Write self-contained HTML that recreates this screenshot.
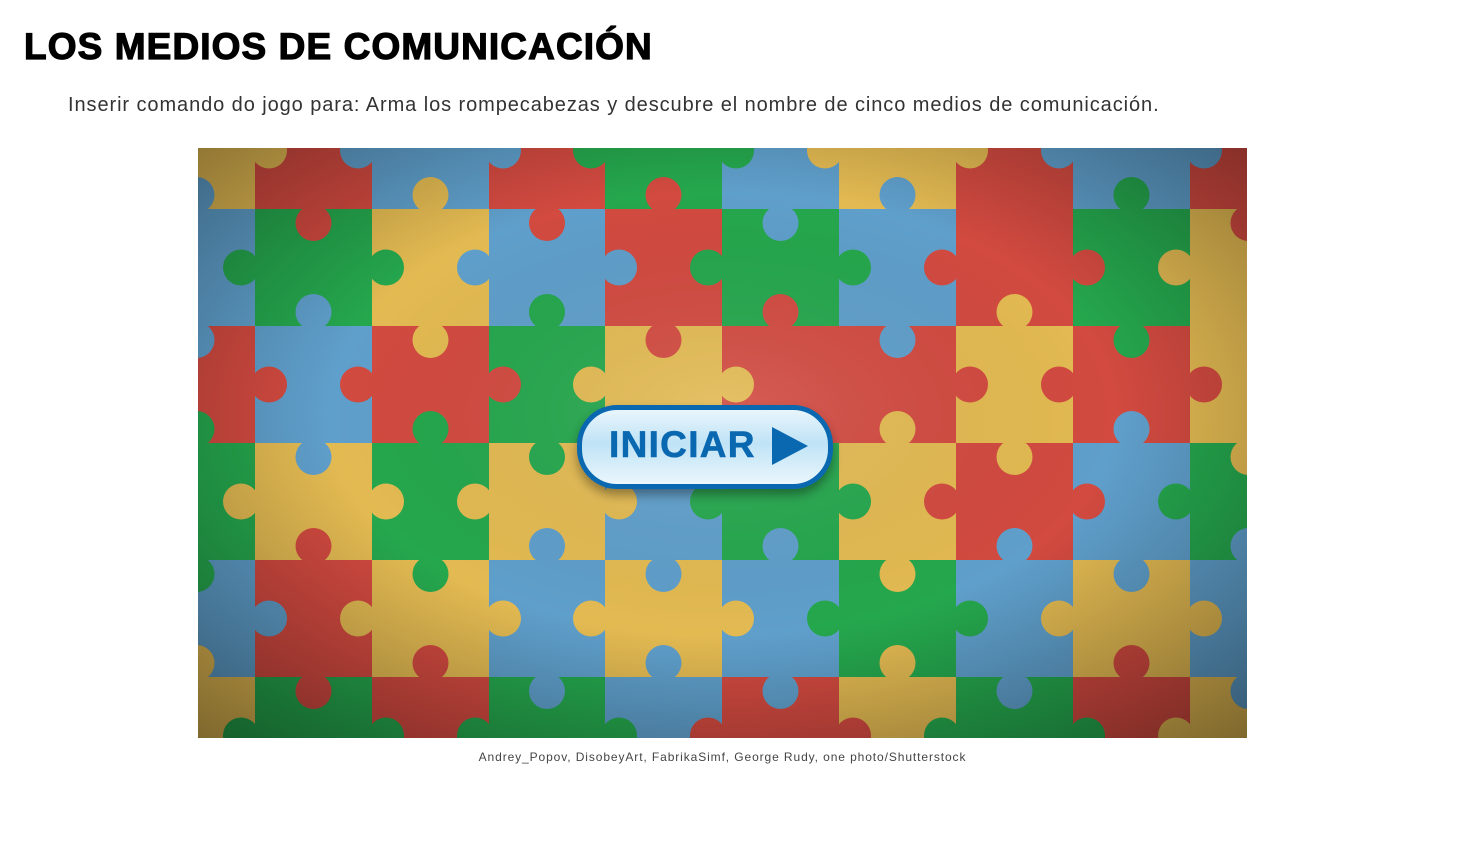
<!DOCTYPE html>
<html><head><meta charset="utf-8">
<style>
html,body{margin:0;padding:0;background:#fff;width:1460px;height:850px;overflow:hidden}
h1{position:absolute;left:24px;top:25px;margin:0;font:bold 37px/44px "Liberation Sans",sans-serif;color:#000;-webkit-text-stroke:1.2px #000;letter-spacing:1.1px;white-space:nowrap}
.sub{position:absolute;left:68px;top:92px;font:20px/26px "Liberation Sans",sans-serif;color:#333;white-space:nowrap;letter-spacing:0.92px}
.cap{position:absolute;left:198px;width:1049px;top:749px;text-align:center;font:12px/16px "Liberation Sans",sans-serif;color:#444;letter-spacing:0.9px}
#pz{position:absolute;left:198px;top:148px;width:1049px;height:590px;overflow:hidden}
.btn{position:absolute;left:577px;top:405px;width:246px;height:74px;border-radius:40px;border:5px solid #0a68b0;background:linear-gradient(#e9f5fc 0%,#bfe3f6 45%,#eaf6fc 100%);box-shadow:0 6px 10px rgba(0,0,0,.35)}
.btn span{position:absolute;left:27px;top:15px;font:bold 37px/40px "Liberation Sans",sans-serif;color:#0a68b0;letter-spacing:1.3px;-webkit-text-stroke:0.6px #0a68b0}
.tri{position:absolute;left:190px;top:17px;width:0;height:0;border-top:19px solid transparent;border-bottom:19px solid transparent;border-left:36px solid #0a68b0}
</style></head><body>
<h1>LOS MEDIOS DE COMUNICACIÓN</h1>
<div class="sub">Inserir comando do jogo para: Arma los rompecabezas y descubre el nombre de cinco medios de comunicación.</div>
<div id="pz"><svg id="sv" width="1049" height="590" xmlns="http://www.w3.org/2000/svg">
<defs><radialGradient id="vg" cx="0.5" cy="0.45" r="0.75"><stop offset="0" stop-color="#fff" stop-opacity="0.12"/><stop offset="0.5" stop-color="#000" stop-opacity="0"/><stop offset="1" stop-color="#000" stop-opacity="0.45"/></radialGradient></defs>
<g id="g"></g>
<rect width="1049" height="590" fill="url(#vg)"/>
</svg></div>
<div class="btn"><span>INICIAR</span><div class="tri"></div></div>
<div class="cap">Andrey_Popov, DisobeyArt, FabrikaSimf, George Rudy, one photo/Shutterstock</div>
<script>
var C={R:"#d24a40",G:"#25a74d",B:"#5f9fcb",Y:"#e3ba52"};
var grid=["YRBRGBYRBR","BGYBRGBRGY","RBRGYRRYRY","GYGYBGYRBG","BRYBYBGBYB","YGRGBRYGRY"];
var xs=[-60,57,174,291,407,524,641,758,875,992,1109];
var ys=[-56,61,178,295,412,529,646];
var s="";
for(var r=0;r<6;r++)for(var c=0;c<10;c++){s+='<rect x="'+xs[c]+'" y="'+ys[r]+'" width="'+(xs[c+1]-xs[c]+1)+'" height="'+(ys[r+1]-ys[r]+1)+'" fill="'+C[grid[r][c]]+'"/>';}
for(var r=0;r<6;r++)for(var c=0;c<10;c++){
 var cx=(xs[c]+xs[c+1])/2, cy=(ys[r]+ys[r+1])/2;
 if(r<5){var up=(r+c)%2==0;var col=up?C[grid[r+1][c]]:C[grid[r][c]];var yy=ys[r+1]+(up?-14:14);
  s+='<rect x="'+(cx-8)+'" y="'+(ys[r+1]-8)+'" width="16" height="16" fill="'+col+'"/><circle cx="'+cx+'" cy="'+yy+'" r="18" fill="'+col+'"/>';}
 if(c<9){var lf=(r+c)%2==1;var col2=lf?C[grid[r][c+1]]:C[grid[r][c]];var xx=xs[c+1]+(lf?-14:14);
  s+='<rect x="'+(xs[c+1]-8)+'" y="'+(cy-8)+'" width="16" height="16" fill="'+col2+'"/><circle cx="'+xx+'" cy="'+cy+'" r="18" fill="'+col2+'"/>';}
}
document.getElementById("g").innerHTML=s;
</script>
</body></html>
